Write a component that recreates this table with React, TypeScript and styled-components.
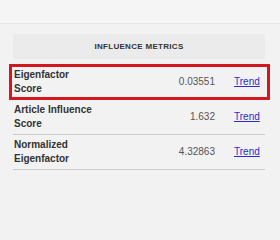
import React from "react";
import styled, { createGlobalStyle } from "styled-components";

const Global = createGlobalStyle`
  html, body { margin: 0; padding: 0; background: #f2f2f2; }
  body { font-family: "Liberation Sans", Arial, sans-serif; }
`;

const Page = styled.div`
  width: 280px;
  height: 240px;
  background: #f2f2f2;
  display: flex;
  flex-direction: column;
`;

const TopBar = styled.div`
  height: 23px;
  background: #f5f5f5;
  border-bottom: 1px solid #e8e8e8;
`;

const Content = styled.div`
  padding: 10px 15px 0 13px;
  display: flex;
  flex-direction: column;
`;

const Header = styled.div`
  height: 25px;
  background: #ebebeb;
  display: flex;
  align-items: center;
  justify-content: center;
  font-size: 8px;
  font-weight: 700;
  letter-spacing: 0.3px;
  color: #333;
  margin-bottom: 6px;
`;

const Row = styled.div<{ $highlight?: boolean }>`
  position: relative;
  display: grid;
  grid-template-columns: 80px 1fr 31px;
  column-gap: 19px;
  align-items: center;
  padding: 3px 0 3px 1px;
  border-bottom: 1px solid #cbcbcb;
  font-size: 10px;
  line-height: 14px;
`;

const Highlight = styled.div`
  position: absolute;
  top: -1px;
  left: -4px;
  right: -5px;
  bottom: -1px;
  border: 3px solid #d4161f;
  pointer-events: none;
`;

const Label = styled.div`
  font-weight: 700;
  color: #333;
`;

const Value = styled.div`
  text-align: right;
  color: #555;
`;

const TrendLink = styled.a`
  color: #2b2bcf;
  text-decoration: underline;
  cursor: pointer;
`;

const rows = [
  { label: "Eigenfactor Score", value: "0.03551", highlight: true },
  { label: "Article Influence Score", value: "1.632" },
  { label: "Normalized Eigenfactor", value: "4.32863" },
];

export default function App() {
  return (
    <Page>
      <Global />
      <TopBar />
      <Content>
        <Header>INFLUENCE METRICS</Header>
        {rows.map((r) => (
          <Row key={r.label}>
            <Label>{r.label}</Label>
            <Value>{r.value}</Value>
            <TrendLink>Trend</TrendLink>
            {r.highlight && <Highlight />}
          </Row>
        ))}
      </Content>
    </Page>
  );
}
